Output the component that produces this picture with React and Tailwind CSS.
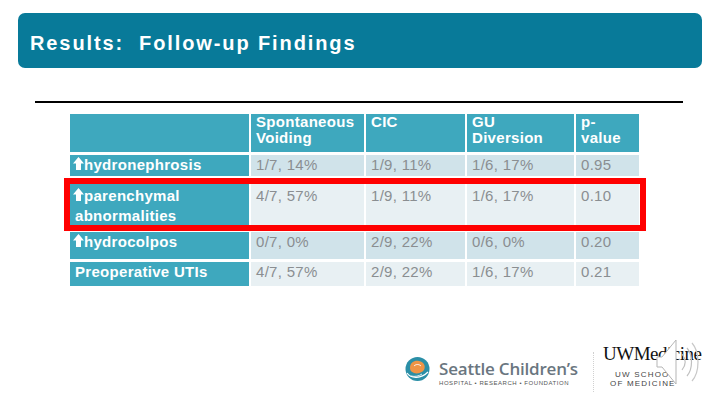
import React from "react";

const Arrow = () => (
  <svg width="11" height="13" viewBox="0 0 11 13" className="inline-block align-baseline mr-[0px] ml-[-2px]">
    <path d="M5.5 0 L11 6.5 L8 6.5 L8 13 L3 13 L3 6.5 L0 6.5 Z" fill="#ffffff" />
  </svg>
);

const rows = [
  { label: "hydronephrosis", arrow: true, h: "h-[21px]", pt: "pt-[2px]", leading: "leading-[16px]", vals: ["1/7, 14%", "1/9, 11%", "1/6, 17%", "0.95"], bg: "bg-[#d0e3ea]" },
  { label: "parenchymal abnormalities", arrow: true, h: "h-[50px]", pt: "pt-[7px]", leading: "leading-[20px]", vals: ["4/7, 57%", "1/9, 11%", "1/6, 17%", "0.10"], bg: "bg-[#e8f0f3]" },
  { label: "hydrocolpos", arrow: true, h: "h-[27px]", pt: "pt-[2px]", leading: "leading-[16px]", vals: ["0/7, 0%", "2/9, 22%", "0/6, 0%", "0.20"], bg: "bg-[#d0e3ea]" },
  { label: "Preoperative UTIs", arrow: false, h: "h-[24px]", pt: "pt-[2px]", leading: "leading-[16px]", vals: ["4/7, 57%", "2/9, 22%", "1/6, 17%", "0.21"], bg: "bg-[#e8f0f3]" },
];

export default function App() {
  const sans = { fontFamily: '"Liberation Sans", Arial, sans-serif' };
  return (
    <div className="relative w-[720px] h-[405px] bg-white overflow-hidden" style={sans}>
      {/* title bar */}
      <div className="mt-[13px] mx-[18px] h-[55px] rounded-[7px] bg-[#087a99] pl-[12px] pt-[20px]">
        <div className="text-white text-[20px] leading-[20px] font-bold tracking-[1.9px]">Results:&nbsp; Follow-up Findings</div>
      </div>

      {/* rule */}
      <div className="mt-[33px] ml-[35px] w-[648px] h-[2px] bg-black" />

      {/* table */}
      <div className="relative mt-[11px] ml-[70px] grid grid-cols-[179px_113px_99px_107px_63px] gap-x-[2px] gap-y-[3px] w-max text-[15px]">
        <div className="h-[38px] bg-[#3ea8be]" />
        {["Spontaneous Voiding", "CIC", "GU Diversion", "p-value"].map((t, i) => (
          <div key={i} className="h-[38px] bg-[#3ea8be] pl-[5px] pt-0 text-white font-bold leading-[16px] tracking-[0.3px]">
            {t === "Spontaneous Voiding" ? (<>Spontaneous<br />Voiding</>) : t === "GU Diversion" ? (<>GU<br />Diversion</>) : t === "p-value" ? (<>p-<br />value</>) : t}
          </div>
        ))}
        {rows.map((r, ri) => (
          <React.Fragment key={ri}>
            <div className={`${r.h} ${r.pt} ${r.leading} bg-[#3ea8be] pl-[5px] text-white font-bold tracking-[0.3px]`}>
              {r.arrow && <Arrow />}
              {r.label === "parenchymal abnormalities" ? (<>parenchymal<br />abnormalities</>) : r.label}
            </div>
            {r.vals.map((v, vi) => (
              <div key={vi} className={`${r.h} ${r.pt} ${r.leading} ${r.bg} pl-[5px] text-[#8a8e91] tracking-[0.3px]`}>
                {v}
              </div>
            ))}
          </React.Fragment>
        ))}
        {/* red highlight */}
        <div className="absolute left-[-6px] top-[64px] w-[582px] h-[53px] border-[6px] border-[#ff0000]" />
      </div>

      {/* logos */}
      <div className="mt-[52px] ml-[405px] flex items-start">
        <div className="w-[188px] mt-[19px] flex items-start">
          <svg width="25" height="24" viewBox="0 0 25 24">
            <circle cx="12.5" cy="12" r="12" fill="#2b8fa7" />
            <path d="M5 11 C5 5 10 3 14 4 C19 5 21 9 19 13 C17 16 12 17 9 16 C6 15 5 13 5 11 Z" fill="#ef9446" />
            <path d="M9 9 C11 7 14 7 16 9" stroke="#ffffff" strokeWidth="1" fill="none" />
            <path d="M2 16 C6 22 16 22 23 15" stroke="#ffffff" strokeWidth="1.2" fill="none" />
            <path d="M6 19 C10 20 14 19 17 17" stroke="#ffffff" strokeWidth="0.8" fill="none" />
          </svg>
          <div className="ml-[9px] mt-[3px]">
            <div className="text-[17px] leading-[17px] text-[#6a7680] tracking-[-0.2px]" style={{ fontFamily: '"Open Sans", "Liberation Sans", sans-serif', fontWeight: 600 }}>Seattle Children’s</div>
            <div className="mt-[2px] text-[6px] leading-[8px] text-[#555] tracking-[0.55px]">HOSPITAL • RESEARCH • FOUNDATION</div>
          </div>
        </div>
        <div className="mt-[14px] h-[40px] border-l border-dotted border-[#d0d0d0]" />
        <div className="relative ml-[9px] w-[100px]">
          <div className="mt-[6px] text-[19px] leading-[19px] text-[#111] tracking-[-0.5px]" style={{ fontFamily: '"Liberation Serif", "Times New Roman", serif' }}>UWMedicine</div>
          <div className="mt-[7px] ml-[12px] text-[8px] leading-[9px] text-[#444] tracking-[1.2px]">UW SCHOOL</div>
          <div className="ml-[7px] text-[8px] leading-[9px] text-[#444] tracking-[1.2px]">OF MEDICINE</div>
          <svg className="absolute left-[53px] top-[-1px]" width="52" height="50" viewBox="0 0 52 50">
            <path d="M1 20 L6 20 L20 3 L20 47 L6 30 L1 30 Z" fill="#ffffff" stroke="#b5b5b5" strokeWidth="1" />
            <path d="M26 17 C30 22 30 28 26 33" stroke="#c0c0c0" strokeWidth="1.2" fill="none" />
            <path d="M31 11 C37 18 37 32 31 39" stroke="#c0c0c0" strokeWidth="1.2" fill="none" />
            <path d="M36 6 C44 15 44 35 36 44" stroke="#c8c8c8" strokeWidth="1.2" fill="none" />
          </svg>
        </div>
      </div>
    </div>
  );
}
